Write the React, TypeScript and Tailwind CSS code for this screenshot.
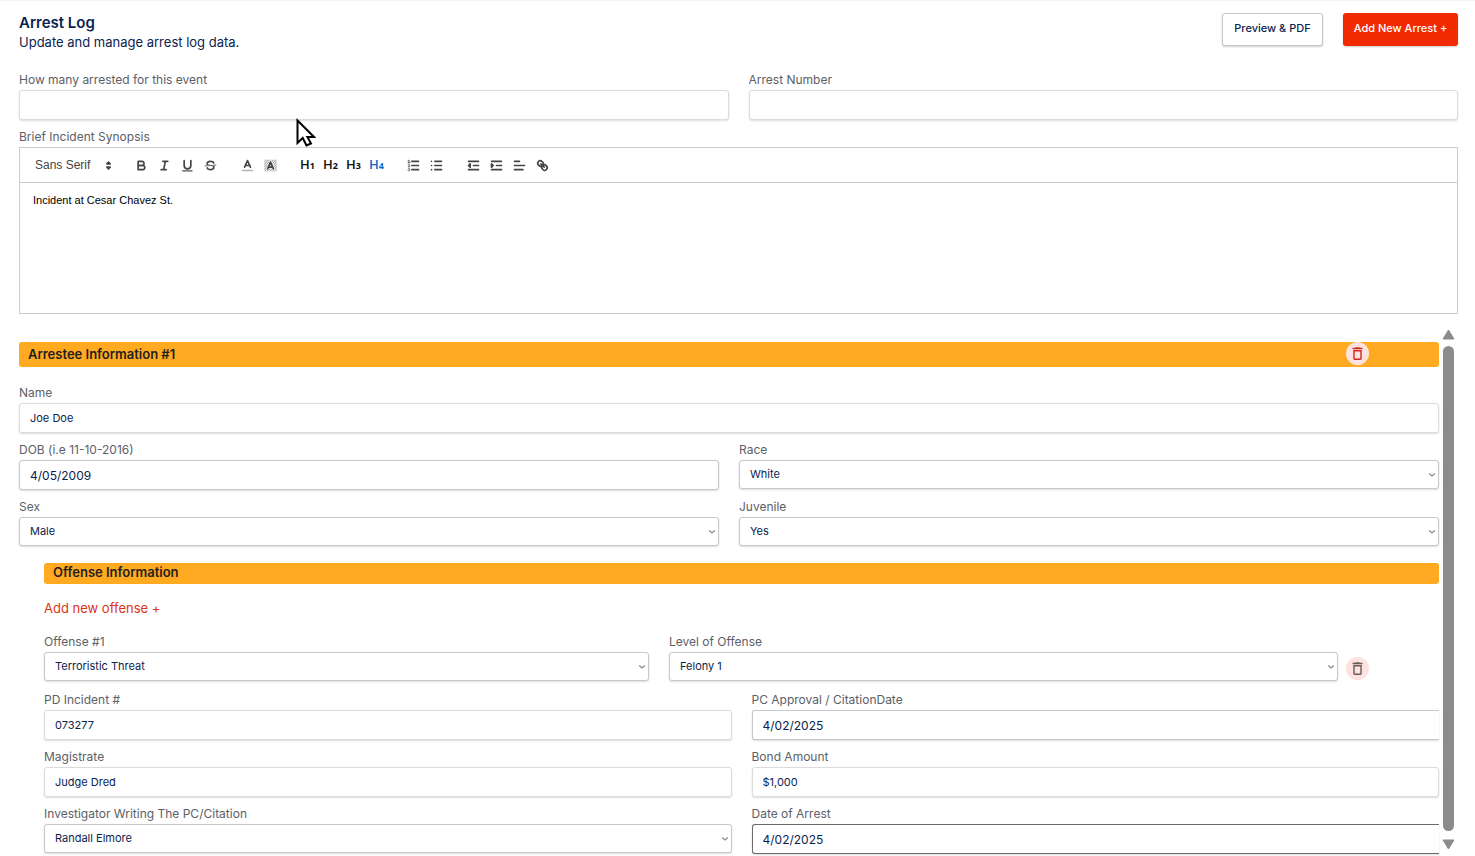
import { useId, useState } from 'react';
import type { ReactNode } from 'react';
import { MdDeleteOutline } from 'react-icons/md';

const CONTROL =
  'block w-full rounded-[3px] border bg-white px-[10px] text-[#0b2350] shadow-[0_1px_2px_rgba(0,0,0,0.14)] outline-none';

function Field({ label, id, children }: { label: string; id: string; children: ReactNode }) {
  return (
    <div className="relative min-w-0">
      <label htmlFor={id} className="block h-[19px] truncate text-[12px] leading-[18px] text-[#5c6067]">
        {label}
      </label>
      {children}
    </div>
  );
}

function TextField({ label, value = '' }: { label: string; value?: string }) {
  const id = useId();
  return (
    <Field label={label} id={id}>
      <input id={id} type="text" defaultValue={value} className={`${CONTROL} h-[30px] border-[#dcdcdf] text-[11px]`} />
    </Field>
  );
}

type DateFieldProps = { label: string; value: string; clipped?: boolean; active?: boolean };

function DateField({ label, value, clipped = false, active = false }: DateFieldProps) {
  const id = useId();
  const edge = clipped ? 'rounded-r-none border-r-0' : '';
  const tone = active ? 'border-[#6b6b6b] bg-[#fcfcfc]' : 'border-[#c6c8cc]';
  return (
    <Field label={label} id={id}>
      <input id={id} type="text" defaultValue={value} className={`${CONTROL} h-[30px] text-[12px] ${edge} ${tone}`} />
    </Field>
  );
}

function SelectField({ label, options }: { label: string; options: string[] }) {
  const id = useId();
  return (
    <Field label={label} id={id}>
      <div className="relative">
        <select id={id} className={`${CONTROL} h-[29px] appearance-none border-[#c6c8cc] text-[11px]`}>
          {options.map((o) => (
            <option key={o}>{o}</option>
          ))}
        </select>
        <svg
          viewBox="0 0 8 6"
          className="pointer-events-none absolute top-3 right-[3px] h-[6px] w-2"
          fill="none"
          stroke="#8a8a8a"
          strokeWidth="1.2"
        >
          <path d="M1.2 1.5 4 4l2.8-2.5" />
        </svg>
      </div>
    </Field>
  );
}

function TrashButton({ label, color }: { label: string; color: string }) {
  return (
    <button
      type="button"
      aria-label={label}
      className={`flex size-[23px] shrink-0 items-center justify-center rounded-full bg-[#fde2df] ${color}`}
    >
      <MdDeleteOutline size={17} />
    </button>
  );
}

function Icon({ children }: { children: ReactNode }) {
  return (
    <svg
      viewBox="0 0 18 18"
      className="size-[15px]"
      fill="none"
      stroke="#444"
      strokeWidth="2"
      strokeLinecap="round"
      strokeLinejoin="round"
    >
      {children}
    </svg>
  );
}

function Heading({ level }: { level: number }) {
  return (
    <span className="flex items-baseline font-['Open_Sans',sans-serif] text-[13px] leading-4 font-semibold">
      H<span className="text-[9px] font-bold">{level}</span>
    </span>
  );
}

const TOOL_GROUPS: { name: string; icon: ReactNode; active?: boolean }[][] = [
  [
    {
      name: 'Bold',
      icon: (
        <Icon>
          <path d="M5,4H9.5A2.5,2.5,0,0,1,12,6.5v0A2.5,2.5,0,0,1,9.5,9H5V4Z" />
          <path d="M5,9h5.5A2.5,2.5,0,0,1,13,11.5v0A2.5,2.5,0,0,1,10.5,14H5V9Z" />
        </Icon>
      ),
    },
    { name: 'Italic', icon: <Icon><path d="M7 4h6M5 14h6M8 14l2-10" /></Icon> },
    {
      name: 'Underline',
      icon: (
        <Icon>
          <path d="M5,3V9a4.012,4.012,0,0,0,4,4H9a4.012,4.012,0,0,0,4-4V3" />
          <rect x="3" y="15" width="12" height="1" rx="0.5" fill="#444" strokeWidth="0.4" />
        </Icon>
      ),
    },
    {
      name: 'Strike',
      icon: (
        <Icon>
          <path strokeWidth="1" d="M15.5 8.5l-13 1" />
          <g fill="#444" stroke="none">
            <path d="M9.007,8C6.542,7.791,6,7.519,6,6.5,6,5.792,7.283,5,9,5c1.571,0,2.765.679,2.969,1.309a1,1,0,0,0,1.9-.617C13.356,4.106,11.354,3,9,3,6.2,3,4,4.538,4,6.5a3.2,3.2,0,0,0,.5,1.843Z" />
            <path d="M8.984,10C11.457,10.208,12,10.479,12,11.5c0,.708-1.283,1.5-3,1.5-1.571,0-2.765-.679-2.969-1.309a1,1,0,1,0-1.9.617C4.644,13.894,6.646,15,9,15c2.8,0,5-1.538,5-3.5a3.2,3.2,0,0,0-.5-1.843Z" />
          </g>
        </Icon>
      ),
    },
  ],
  [
    {
      name: 'Text color',
      icon: (
        <Icon>
          <path d="M3 15h12" opacity="0.4" />
          <path d="M5.5 11 9 3l3.5 8M11.63 9H6.38" />
        </Icon>
      ),
    },
    {
      name: 'Background color',
      icon: (
        <Icon>
          <defs>
            <pattern id="hatch" width="3" height="3" patternUnits="userSpaceOnUse">
              <path d="M-1 1 1-1M0 3l3-3M2 4l2-2" stroke="#666" strokeWidth="1" />
            </pattern>
          </defs>
          <rect x="1.5" y="2" width="15" height="14" fill="url(#hatch)" stroke="none" />
          <path d="M5.5 13 9 5l3.5 8M11.63 11H6.38" stroke="#fff" strokeWidth="4" opacity="0.6" />
          <path d="M5.5 13 9 5l3.5 8M11.63 11H6.38" />
        </Icon>
      ),
    },
  ],
  [
    { name: 'Heading 1', icon: <Heading level={1} /> },
    { name: 'Heading 2', icon: <Heading level={2} /> },
    { name: 'Heading 3', icon: <Heading level={3} /> },
    { name: 'Heading 4', icon: <Heading level={4} />, active: true },
  ],
  [
    {
      name: 'Ordered list',
      icon: (
        <Icon>
          <path d="M7 4h8M7 9h8M7 14h8" />
          <g strokeWidth="1">
            <path d="M2.5 5.5h2.5M3.5 5.5v-3l-1 .5" />
            <path d="M4.5,10.5h-2c0-.234,1.85-1.076,1.85-2.234A0.959,0.959,0,0,0,2.5,8.156" />
            <path d="M2.5,14.846a0.959,0.959,0,0,0,1.85-.109A0.7,0.7,0,0,0,3.75,14a0.688,0.688,0,0,0,.6-0.736,0.959,0.959,0,0,0-1.85-.109" />
          </g>
        </Icon>
      ),
    },
    { name: 'Bullet list', icon: <Icon><path d="M7 4h8M7 9h8M7 14h8M3 4h.01M3 9h.01M3 14h.01" /></Icon> },
  ],
  [
    {
      name: 'Outdent',
      icon: (
        <Icon>
          <path d="M3 14h12M3 4h12M9 9h6" />
          <path d="M5 7v4L3 9Z" fill="#444" />
        </Icon>
      ),
    },
    {
      name: 'Indent',
      icon: (
        <Icon>
          <path d="M3 14h12M3 4h12M9 9h6" />
          <path d="M3 7v4l2-2Z" fill="#444" />
        </Icon>
      ),
    },
    { name: 'Align', icon: <Icon><path d="M3 9h12M3 14h10M3 4h6" /></Icon> },
    {
      name: 'Link',
      icon: (
        <Icon>
          <path d="M7 7l4 4" />
          <path d="M9.1,4.577a3.476,3.476,0,0,0-.36,4.679A3.476,3.476,0,0,0,13.423,8.9C14.815,7.5,15.965,6.4,13.783,4.217S10.5,3.185,9.1,4.577Z" transform="matrix(-1 0 0 1 18 0)" />
          <path d="M4.577,9.1a3.476,3.476,0,0,1,4.679-.36,3.476,3.476,0,0,1-.36,4.679c-1.392,1.392-2.5,2.542-4.679.36S3.185,10.5,4.577,9.1Z" transform="matrix(-1 0 0 1 18 0)" />
        </Icon>
      ),
    },
  ],
];

function Editor() {
  const id = useId();
  const [text, setText] = useState('Incident at Cesar Chavez St.');

  return (
    <Field label="Brief Incident Synopsis" id={id}>
      <div className="border border-[#ccc] font-['Liberation_Sans',sans-serif]">
        <div className="flex h-[35px] items-center gap-[14px] border-b border-[#ccc] pl-[15px]">
          <div className="relative">
            <select
              aria-label="Font"
              className="block h-5 w-[81px] appearance-none bg-transparent text-[12px] leading-5 text-[#444] outline-none"
            >
              <option>Sans Serif</option>
            </select>
            <svg
              viewBox="0 0 18 18"
              className="pointer-events-none absolute top-[3px] right-0 size-[15px]"
              fill="#444"
              stroke="#444"
              strokeWidth="2"
              strokeLinejoin="round"
            >
              <path d="M7 11l2 2 2-2ZM7 7l2-2 2 2Z" />
            </svg>
          </div>
          {TOOL_GROUPS.map((group) => (
            <div key={group[0].name} className="flex">
              {group.map((tool) => (
                <button
                  key={tool.name}
                  type="button"
                  aria-label={tool.name}
                  className={`flex h-5 w-[23px] items-center justify-center ${tool.active ? 'text-[#0b6bc4]' : 'text-[#111]'}`}
                >
                  {tool.icon}
                </button>
              ))}
            </div>
          ))}
        </div>
        <textarea
          id={id}
          value={text}
          onChange={(e) => setText(e.target.value)}
          className="block h-[130px] w-full resize-none px-[13px] py-[9px] text-[11px] leading-4 text-black outline-none"
        />
      </div>
    </Field>
  );
}

function ScrollBar() {
  return (
    <div className="flex w-[19px] shrink-0 flex-col items-center gap-[6px] pt-[2px] pb-1" aria-hidden="true">
      <svg viewBox="0 0 13 11" className="h-[11px] w-[13px]" fill="#8b8b8b" stroke="#8b8b8b" strokeLinejoin="round">
        <path d="M6.5 1 12 10H1Z" />
      </svg>
      <div className="w-[11px] flex-1 rounded-full bg-[#8b8b8b]" />
      <svg viewBox="0 0 13 11" className="mt-[2px] h-[11px] w-[13px]" fill="#8b8b8b" stroke="#8b8b8b" strokeLinejoin="round">
        <path d="M6.5 10 12 1H1Z" />
      </svg>
    </div>
  );
}

function Pointer() {
  return (
    <svg
      viewBox="0 0 20 29"
      className="pointer-events-none absolute top-[47px] left-[277px] z-10 h-[29px] w-5"
      fill="#fff"
      stroke="#000"
      strokeWidth="2"
      strokeLinejoin="miter"
    >
      <path d="M1.5 2.5V25l5.2-5 3.8 7.5 4.5-2-3.6-6.5H18Z" />
    </svg>
  );
}

export default function App() {
  return (
    <main className="min-h-screen border-t border-[#f3f3f3] bg-white pt-3 pr-[17px] pl-[19px] font-[Inter,sans-serif]">
      <header className="flex h-[58px] items-start justify-between">
        <div className="text-[#0b2350]">
          <h1 className="text-[15px] leading-5 font-semibold">Arrest Log</h1>
          <p className="text-[13px] leading-[18px]">Update and manage arrest log data.</p>
        </div>
        <div className="flex gap-5 text-[11px] font-medium">
          <button
            type="button"
            className="h-[33px] w-[101px] rounded-[3px] border border-[#c6c8cc] bg-white pb-[2px] text-[#0b2350] shadow-[0_1px_2px_rgba(0,0,0,0.2)]"
          >
            Preview &amp; PDF
          </button>
          <button
            type="button"
            className="h-[33px] w-[115px] rounded-[3px] bg-[#f22a02] pb-[2px] text-white shadow-[0_1px_2px_rgba(0,0,0,0.2)]"
          >
            Add New Arrest +
          </button>
        </div>
      </header>

      <div className="grid gap-2">
        <div className="relative grid grid-cols-2 gap-5">
          <TextField label="How many arrested for this event" />
          <TextField label="Arrest Number" />
          <Pointer />
        </div>
        <Editor />
      </div>

      <div className="mt-[13px] flex">
        <div className="min-w-0 flex-1 pt-[15px]">
          <div className="flex h-[25px] items-start justify-between rounded-[3px] bg-[#ffaa20] pr-[70px] pl-[9px]">
            <h2 className="text-[13px] leading-6 font-semibold text-[#1f1f1f]">Arrestee Information #1</h2>
            <TrashButton label="Delete arrestee" color="text-[#cf2a20]" />
          </div>

          <div className="mt-[17px] grid grid-cols-2 gap-x-5 gap-y-2">
            <div className="col-span-2">
              <TextField label="Name" value="Joe Doe" />
            </div>
            <DateField label="DOB (i.e 11-10-2016)" value="4/05/2009" />
            <SelectField label="Race" options={['White', 'Black', 'Hispanic', 'Asian', 'Other']} />
            <SelectField label="Sex" options={['Male', 'Female']} />
            <SelectField label="Juvenile" options={['Yes', 'No']} />
          </div>

          <section className="mt-[17px] pl-[25px]">
            <h2 className="h-[21px] rounded-[3px] bg-[#ffaa20] pl-[9px] text-[13px] leading-[18px] font-semibold text-[#1f1f1f]">
              Offense Information
            </h2>
            <button type="button" className="mt-[14px] block text-[13px] leading-5 text-[#dc3316]">
              Add new offense +
            </button>

            <div className="mt-[15px] flex">
              <div className="mr-5 min-w-0 flex-[605]">
                <SelectField label="Offense #1" options={['Terroristic Threat', 'Assault', 'Theft']} />
              </div>
              <div className="min-w-0 flex-[669]">
                <SelectField label="Level of Offense" options={['Felony 1', 'Felony 2', 'Felony 3', 'Misdemeanor A']} />
              </div>
              <div className="mr-[70px] ml-2 pt-6">
                <TrashButton label="Delete offense" color="text-[#6b5a5a]" />
              </div>
            </div>

            <div className="mt-[10px] grid grid-cols-2 gap-x-5 gap-y-2">
              <TextField label="PD Incident #" value="073277" />
              <DateField label="PC Approval / CitationDate" value="4/02/2025" clipped />
              <TextField label="Magistrate" value="Judge Dred" />
              <TextField label="Bond Amount" value="$1,000" />
              <SelectField label="Investigator Writing The PC/Citation" options={['Randall Elmore']} />
              <DateField label="Date of Arrest" value="4/02/2025" clipped active />
            </div>
          </section>
        </div>
        <ScrollBar />
      </div>
    </main>
  );
}
